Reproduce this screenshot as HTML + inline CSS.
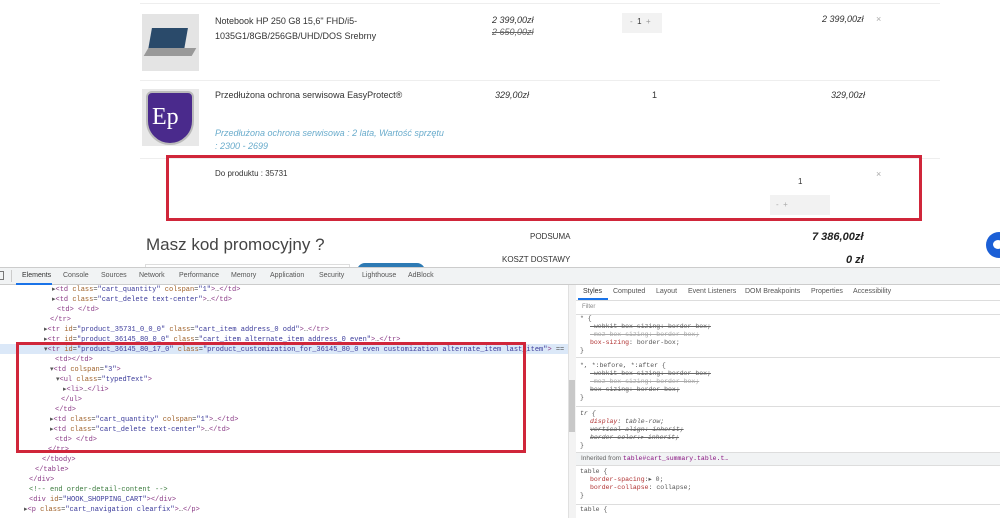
<!DOCTYPE html>
<html><head><meta charset="utf-8">
<style>
*{margin:0;padding:0;box-sizing:border-box}
body{width:1000px;height:518px;overflow:hidden;background:#fff;font-family:"Liberation Sans",sans-serif;position:relative}
.a{position:absolute;white-space:nowrap}
.t{font-size:9px;color:#333}
.i{font-style:italic}
.m{font-family:"Liberation Mono",monospace;font-size:7px;color:#555;line-height:10px}
.tag{color:#8a3a86}.at{color:#a0622a}.v{color:#3a3a9a}
.pn{color:#b03030}
.s{text-decoration:line-through;color:#666}
.line{position:absolute;height:1px;background:#eee}
</style></head><body>
<div class="line" style="left:140px;top:3px;width:800px"></div>
<div class="a" style="left:142px;top:14px;width:57px;height:57px;background:#e4e4e4"></div>
<div class="a" style="left:150px;top:28px;width:36px;height:22px;background:#2a4a6a;transform:skewX(-10deg)"></div>
<div class="a" style="left:146px;top:48px;width:48px;height:8px;background:#999;transform:skewX(-30deg)"></div>
<div class="a t" style="left:215px;top:14px;line-height:15px">Notebook HP 250 G8 15,6" FHD/i5-<br>1035G1/8GB/256GB/UHD/DOS Srebrny</div>
<div class="a t i" style="left:492px;top:14px;line-height:12px">2 399,00zł<br><span class="s">2 650,00zł</span></div>
<div class="a" style="left:622px;top:13px;width:40px;height:20px;background:#f2f2f2"></div>
<div class="a t" style="left:630px;top:17px;font-size:8px;color:#999">-&nbsp;&nbsp;<span style="color:#333">1</span>&nbsp;&nbsp;+</div>
<div class="a t i" style="left:822px;top:14px">2 399,00zł</div>
<div class="a t" style="left:876px;top:14px;color:#aaa">×</div>
<div class="line" style="left:140px;top:80px;width:800px"></div>
<div class="a" style="left:142px;top:89px;width:57px;height:57px;background:#e8e8e8"></div>
<div class="a" style="left:146px;top:91px;width:48px;height:54px;background:#4a2a8c;border-radius:6px 6px 24px 24px;border:2px solid #bbb"></div>
<div class="a" style="left:152px;top:104px;font-family:'Liberation Serif',serif;font-size:24px;color:#fff">Ep</div>
<div class="a t" style="left:215px;top:90px">Przedłużona ochrona serwisowa EasyProtect®</div>
<div class="a t i" style="left:495px;top:90px">329,00zł</div>
<div class="a t" style="left:652px;top:90px">1</div>
<div class="a t i" style="left:831px;top:90px">329,00zł</div>
<div class="a t i" style="left:215px;top:127px;line-height:13px;color:#6aaccc">Przedłużona ochrona serwisowa : 2 lata, Wartość sprzętu<br>: 2300 - 2699</div>
<div class="line" style="left:140px;top:158px;width:800px"></div>
<div class="a" style="left:166px;top:155px;width:756px;height:66px;border:3px solid #d0263a"></div>
<div class="a t" style="left:215px;top:169px;font-size:8px">Do produktu : 35731</div>
<div class="a t" style="left:798px;top:177px;font-size:8px">1</div>
<div class="a" style="left:770px;top:195px;width:60px;height:20px;background:#f2f2f2"></div>
<div class="a t" style="left:776px;top:200px;font-size:8px;color:#aaa">-&nbsp;&nbsp;+</div>
<div class="a t" style="left:876px;top:169px;color:#aaa">×</div>
<div class="a" style="left:146px;top:235px;font-size:17px;color:#444">Masz kod promocyjny ?</div>
<div class="a" style="left:145px;top:264px;width:205px;height:6px;border:1px solid #ddd"></div>
<div class="a" style="left:357px;top:263px;width:68px;height:8px;background:#2d7ab4;border-radius:8px 8px 0 0"></div>
<div class="a t" style="left:530px;top:232px;font-size:8px">PODSUMA</div>
<div class="a t" style="left:502px;top:255px;font-size:8px">KOSZT DOSTAWY</div>
<div class="a i" style="left:812px;top:231px;font-size:11px;font-weight:bold;color:#222">7 386,00zł</div>
<div class="a i" style="left:846px;top:254px;font-size:11px;font-weight:bold;color:#222">0 zł</div>
<div class="a" style="left:986px;top:232px;width:26px;height:26px;border-radius:50%;background:#1b5fd6"></div>
<div class="a" style="left:993px;top:240px;width:10px;height:9px;border-radius:50%;background:#fff"></div>
<div class="a" style="left:0;top:267px;width:1000px;height:18px;background:#f1f3f4;border-top:1px solid #ccc;border-bottom:1px solid #ccc"></div>
<div class="a" style="left:-3px;top:271px;width:7px;height:9px;border:1px solid #777"></div>
<div class="a" style="left:11px;top:270px;width:1px;height:12px;background:#ccc"></div>
<div class="a" style="left:16px;top:283px;width:36px;height:2px;background:#1a73e8"></div>
<div class="a" style="left:22px;top:272px;font-size:7px;color:#333">Elements</div>
<div class="a" style="left:63px;top:272px;font-size:7px;color:#555">Console</div>
<div class="a" style="left:101px;top:272px;font-size:7px;color:#555">Sources</div>
<div class="a" style="left:139px;top:272px;font-size:7px;color:#555">Network</div>
<div class="a" style="left:179px;top:272px;font-size:7px;color:#555">Performance</div>
<div class="a" style="left:231px;top:272px;font-size:7px;color:#555">Memory</div>
<div class="a" style="left:270px;top:272px;font-size:7px;color:#555">Application</div>
<div class="a" style="left:319px;top:272px;font-size:7px;color:#555">Security</div>
<div class="a" style="left:362px;top:272px;font-size:7px;color:#555">Lighthouse</div>
<div class="a" style="left:408px;top:272px;font-size:7px;color:#555">AdBlock</div>
<div class="a" style="left:0;top:344px;width:568px;height:10px;background:#dbe8f8"></div>
<div class="a" style="left:568px;top:285px;width:8px;height:233px;background:#f3f3f3;border-left:1px solid #e0e0e0"></div>
<div class="a" style="left:569px;top:380px;width:6px;height:52px;background:#c8c8c8"></div>
<div class="a m" style="left:0;top:285px;width:566px;overflow:hidden">
<div style="padding-left:52px">▸<span class="tag">&lt;td</span> <span class="at">class</span>=<span class="v">"cart_quantity"</span> <span class="at">colspan</span>=<span class="v">"1"</span><span class="tag">&gt;</span>…<span class="tag">&lt;/td&gt;</span></div>
<div style="padding-left:52px">▸<span class="tag">&lt;td</span> <span class="at">class</span>=<span class="v">"cart_delete text-center"</span><span class="tag">&gt;</span>…<span class="tag">&lt;/td&gt;</span></div>
<div style="padding-left:57px"><span class="tag">&lt;td&gt; &lt;/td&gt;</span></div>
<div style="padding-left:50px"><span class="tag">&lt;/tr&gt;</span></div>
<div style="padding-left:44px">▸<span class="tag">&lt;tr</span> <span class="at">id</span>=<span class="v">"product_35731_0_0_0"</span> <span class="at">class</span>=<span class="v">"cart_item address_0 odd"</span><span class="tag">&gt;</span>…<span class="tag">&lt;/tr&gt;</span></div>
<div style="padding-left:44px">▸<span class="tag">&lt;tr</span> <span class="at">id</span>=<span class="v">"product_36145_80_0_0"</span> <span class="at">class</span>=<span class="v">"cart_item alternate_item address_0 even"</span><span class="tag">&gt;</span>…<span class="tag">&lt;/tr&gt;</span></div>
<div style="padding-left:44px">▾<span class="tag">&lt;tr</span> <span class="at">id</span>=<span class="v">"product_36145_80_17_0"</span> <span class="at">class</span>=<span class="v">"product_customization_for_36145_80_0 even customization alternate_item last_item"</span><span class="tag">&gt;</span> == $0</div>
<div style="padding-left:55px"><span class="tag">&lt;td&gt;&lt;/td&gt;</span></div>
<div style="padding-left:50px">▾<span class="tag">&lt;td</span> <span class="at">colspan</span>=<span class="v">"3"</span><span class="tag">&gt;</span></div>
<div style="padding-left:56px">▾<span class="tag">&lt;ul</span> <span class="at">class</span>=<span class="v">"typedText"</span><span class="tag">&gt;</span></div>
<div style="padding-left:63px">▸<span class="tag">&lt;li&gt;</span>…<span class="tag">&lt;/li&gt;</span></div>
<div style="padding-left:61px"><span class="tag">&lt;/ul&gt;</span></div>
<div style="padding-left:55px"><span class="tag">&lt;/td&gt;</span></div>
<div style="padding-left:50px">▸<span class="tag">&lt;td</span> <span class="at">class</span>=<span class="v">"cart_quantity"</span> <span class="at">colspan</span>=<span class="v">"1"</span><span class="tag">&gt;</span>…<span class="tag">&lt;/td&gt;</span></div>
<div style="padding-left:50px">▸<span class="tag">&lt;td</span> <span class="at">class</span>=<span class="v">"cart_delete text-center"</span><span class="tag">&gt;</span>…<span class="tag">&lt;/td&gt;</span></div>
<div style="padding-left:55px"><span class="tag">&lt;td&gt; &lt;/td&gt;</span></div>
<div style="padding-left:48px"><span class="tag">&lt;/tr&gt;</span></div>
<div style="padding-left:42px"><span class="tag">&lt;/tbody&gt;</span></div>
<div style="padding-left:35px"><span class="tag">&lt;/table&gt;</span></div>
<div style="padding-left:29px"><span class="tag">&lt;/div&gt;</span></div>
<div style="padding-left:29px;color:#3a7a3c">&lt;!-- end order-detail-content --&gt;</div>
<div style="padding-left:29px"><span class="tag">&lt;div</span> <span class="at">id</span>=<span class="v">"HOOK_SHOPPING_CART"</span><span class="tag">&gt;&lt;/div&gt;</span></div>
<div style="padding-left:24px">▸<span class="tag">&lt;p</span> <span class="at">class</span>=<span class="v">"cart_navigation clearfix"</span><span class="tag">&gt;</span>…<span class="tag">&lt;/p&gt;</span></div>
</div>
<div class="a" style="left:16px;top:342px;width:510px;height:111px;border:3px solid #d0263a"></div>
<div class="a" style="left:576px;top:285px;width:424px;height:233px;background:#fff"></div>
<div class="a" style="left:583px;top:288px;font-size:7px;color:#333">Styles</div>
<div class="a" style="left:578px;top:298px;width:30px;height:2px;background:#1a73e8"></div>
<div class="a" style="left:613px;top:288px;font-size:7px;color:#555">Computed</div>
<div class="a" style="left:656px;top:288px;font-size:7px;color:#555">Layout</div>
<div class="a" style="left:688px;top:288px;font-size:7px;color:#555">Event Listeners</div>
<div class="a" style="left:745px;top:288px;font-size:7px;color:#555">DOM Breakpoints</div>
<div class="a" style="left:811px;top:288px;font-size:7px;color:#555">Properties</div>
<div class="a" style="left:853px;top:288px;font-size:7px;color:#555">Accessibility</div>
<div class="a" style="left:576px;top:300px;width:424px;height:1px;background:#ddd"></div>
<div class="a" style="left:582px;top:304px;font-size:6px;color:#888">Filter</div>
<div class="a" style="left:576px;top:314px;width:424px;height:1px;background:#ddd"></div>
<div class="a m" style="left:580px;top:315px;line-height:8px;font-size:6.5px">
<div>* {</div>
<div style="padding-left:10px" class="s">-webkit-box-sizing: border-box;</div>
<div style="padding-left:10px;color:#aaa" class="s">-moz-box-sizing: border-box;</div>
<div style="padding-left:10px"><span class="pn">box-sizing</span>: border-box;</div>
<div>}</div></div>
<div class="a" style="left:576px;top:357px;width:424px;height:1px;background:#ddd"></div>
<div class="a m" style="left:580px;top:362px;line-height:8px;font-size:6.5px">
<div>*, *:before, *:after {</div>
<div style="padding-left:10px" class="s">-webkit-box-sizing: border-box;</div>
<div style="padding-left:10px;color:#aaa" class="s">-moz-box-sizing: border-box;</div>
<div style="padding-left:10px" class="s">box-sizing: border-box;</div>
<div>}</div></div>
<div class="a" style="left:576px;top:406px;width:424px;height:1px;background:#ddd"></div>
<div class="a m" style="left:580px;top:410px;line-height:8px;font-size:6.5px">
<div class="i">tr {</div>
<div style="padding-left:10px" class="i"><span class="pn">display</span>: table-row;</div>
<div style="padding-left:10px" class="s i">vertical-align: inherit;</div>
<div style="padding-left:10px" class="s i">border-color:▸ inherit;</div>
<div>}</div></div>
<div class="a" style="left:576px;top:452px;width:424px;height:14px;background:#f1f3f4;border-top:1px solid #ddd;border-bottom:1px solid #ddd"></div>
<div class="a" style="left:581px;top:455px;font-size:6.5px;color:#666">Inherited from <span style="font-family:'Liberation Mono',monospace;color:#881280">table#cart_summary.table.t…</span></div>
<div class="a m" style="left:580px;top:468px;line-height:8px;font-size:6.5px">
<div>table {</div>
<div style="padding-left:10px"><span class="pn">border-spacing</span>:▸ 0;</div>
<div style="padding-left:10px"><span class="pn">border-collapse</span>: collapse;</div>
<div>}</div></div>
<div class="a" style="left:576px;top:504px;width:424px;height:1px;background:#ddd"></div>
<div class="a m" style="left:580px;top:506px;line-height:8px;font-size:6.5px">table {</div>
</body></html>
